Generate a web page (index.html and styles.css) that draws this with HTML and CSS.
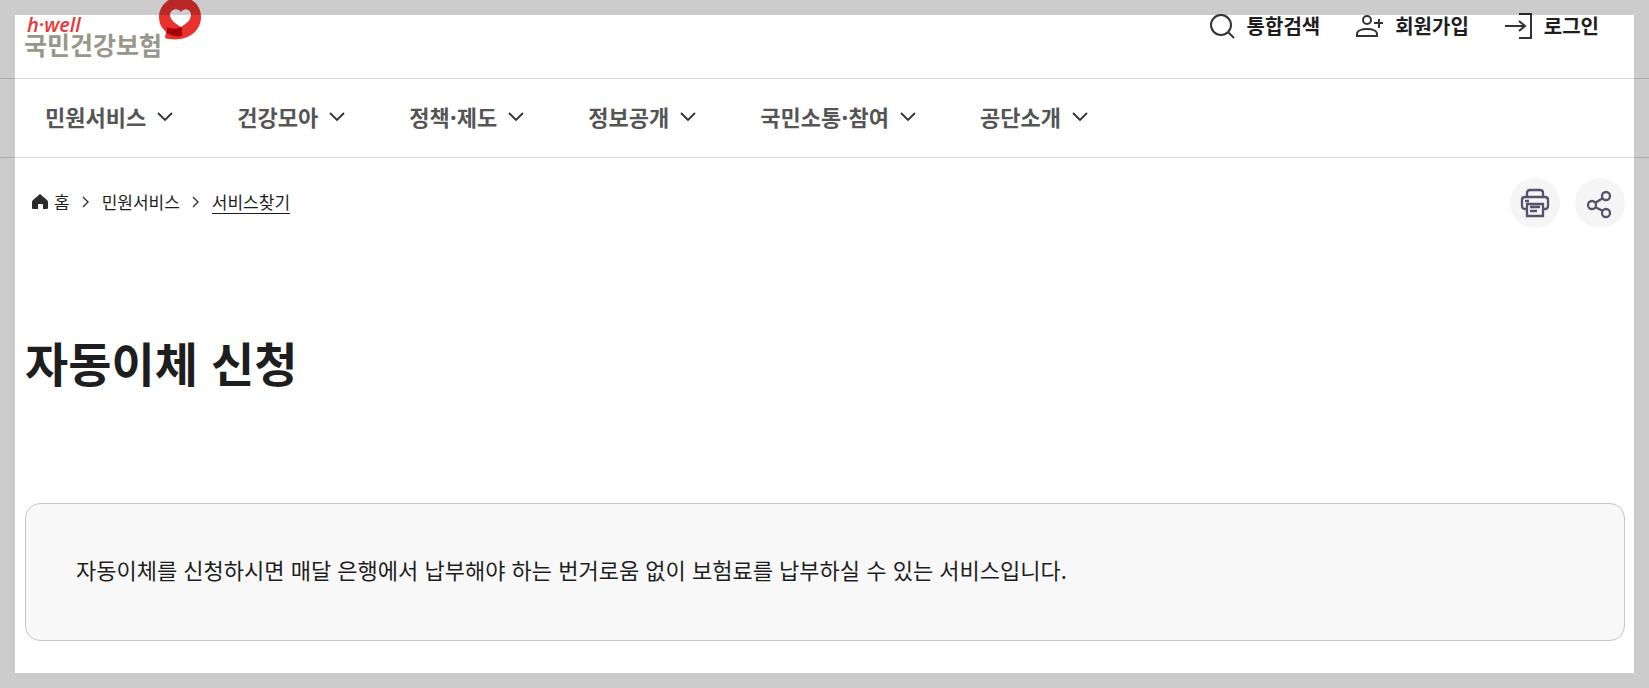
FILE: index.html
```html
<!DOCTYPE html>
<html lang="ko">
<head>
  <meta charset="UTF-8">
  <meta name="viewport" content="width=device-width, initial-scale=1">
  <title>자동이체 신청 | 국민건강보험</title>
  <link rel="stylesheet" href="styles.css">
</head>
<body>
  <header class="header">
    <div class="header-top">
      <a href="#" class="logo" aria-label="h-well 국민건강보험">
        <svg width="180" height="60" viewBox="0 0 180 60">
          <text class="logo-en" x="2" y="32">h·well</text>
          <text class="logo-ko" x="-1" y="55">국민건강보험</text>
          <path fill="#e8322e" fill-rule="evenodd" d="M155-3C143-3 134 6 134 17c0 8 4 12 7 15l-1 6c16 5 36-3 36-21C176 5 167-3 155-3zM156 27c-5-3-11-7-11-12 0-6 8-8 11-3 3-5 10-3 10 3 0 5-5 9-10 12z"/>
          <path fill="#a80008" d="M142 27c4 2 9 2 15 0v9c-5 1-10 0-15-3z"/>
        </svg>
      </a>
      <ul class="util">
        <li>
          <a href="#">
            <svg width="26" height="26" viewBox="0 0 26 26"><circle cx="12" cy="12" r="10"/><path d="M19 19l6 6"/></svg>
            통합검색
          </a>
        </li>
        <li>
          <a href="#">
            <svg width="28" height="26" viewBox="0 0 28 26"><circle cx="12" cy="7" r="4"/><path d="M2 23v-2c0-3 4-5 10-5s10 2 10 5v2zM24 6v9M19 10h9"/></svg>
            회원가입
          </a>
        </li>
        <li>
          <a href="#">
            <svg width="28" height="26" viewBox="0 0 28 26"><path d="M15 1h12v24H15M1 13h20M15 8l6 5-6 5"/></svg>
            로그인
          </a>
        </li>
      </ul>
    </div>
    <nav class="gnb" aria-label="주메뉴">
      <button type="button">민원서비스 <svg width="14" height="10" viewBox="0 0 14 10"><path d="M0 1l7 7 7-7"/></svg></button>
      <button type="button">건강모아 <svg width="14" height="10" viewBox="0 0 14 10"><path d="M0 1l7 7 7-7"/></svg></button>
      <button type="button">정책·제도 <svg width="14" height="10" viewBox="0 0 14 10"><path d="M0 1l7 7 7-7"/></svg></button>
      <button type="button">정보공개 <svg width="14" height="10" viewBox="0 0 14 10"><path d="M0 1l7 7 7-7"/></svg></button>
      <button type="button">국민소통·참여 <svg width="14" height="10" viewBox="0 0 14 10"><path d="M0 1l7 7 7-7"/></svg></button>
      <button type="button">공단소개 <svg width="14" height="10" viewBox="0 0 14 10"><path d="M0 1l7 7 7-7"/></svg></button>
    </nav>
  </header>

  <main class="content">
    <div class="location">
      <nav class="breadcrumb" aria-label="현재 위치">
        <a href="#" class="home">
          <svg width="16" height="16" viewBox="0 0 16 16"><path d="M8 0l7 6q1 1 1 2v6q0 1-1 1h-4v-4q0-1-1-1H7q-1 0-1 1v4H1q-1 0-1-1V8q0-1 1-2z"/></svg>
          홈
        </a>
        <svg class="sep" width="8" height="12" viewBox="0 0 8 12"><path d="M1 1l5 5-5 5"/></svg>
        <a href="#">민원서비스</a>
        <svg class="sep" width="8" height="12" viewBox="0 0 8 12"><path d="M1 1l5 5-5 5"/></svg>
        <a href="#" class="current" aria-current="page">서비스찾기</a>
      </nav>
      <div class="tools">
        <button type="button" aria-label="인쇄">
          <svg width="28" height="28" viewBox="0 0 28 28"><path d="M6 8V4q0-3 3-3h10q3 0 3 3v4M6 20H4q-3 0-3-3v-6q0-3 3-3h20q3 0 3 3v6q0 3-3 3h-2M6 15h16v12H6zM9 18h10M9 22h7M4 12h4"/></svg>
        </button>
        <button type="button" aria-label="공유">
          <svg width="28" height="28" viewBox="0 0 28 28"><circle cx="6" cy="16" r="4"/><circle cx="20" cy="7" r="4"/><circle cx="20" cy="24" r="4"/><path d="M9 14l8-5M9 18l8 4"/></svg>
        </button>
      </div>
    </div>
    <h1>자동이체 신청</h1>
    <p class="info-box">자동이체를 신청하시면 매달 은행에서 납부해야 하는 번거로움 없이 보험료를 납부하실 수 있는 서비스입니다.</p>
  </main>
  <div class="frame"></div>
</body>
</html>
```

FILE: styles.css
```css
* {
  box-sizing: border-box;
}
body {
  margin: 0;
  background: #fff;
  color: #1e1e1e;
  font-family: "Noto Sans CJK KR", sans-serif;
}
a {
  color: inherit;
  text-decoration: none;
}
button {
  padding: 0;
  border: none;
  background: none;
  font-family: inherit;
  cursor: pointer;
}
svg {
  display: block;
  flex: none;
  overflow: visible;
  fill: none;
  stroke: #333;
  stroke-width: 2;
}

/* header */
.header-top {
  display: flex;
  justify-content: space-between;
  align-items: flex-start;
  padding: 0 50px 18px 25px;
  border-bottom: 1px solid #d8d8d8;
}
.logo svg {
  stroke: none;
}
.logo-en {
  fill: #e8373a;
  font: italic 600 20px "Open Sans", sans-serif;
}
.logo-ko {
  fill: #97978b;
  font-size: 25px;
  font-weight: 700;
}
.util {
  display: flex;
  gap: 35px;
  margin: 0;
  padding: 11px 0 0;
  list-style: none;
}
.util a {
  display: flex;
  align-items: center;
  gap: 12px;
  font-size: 20px;
  font-weight: 700;
  line-height: 30px;
}
.gnb {
  display: flex;
  gap: 65px;
  padding: 18px 45px 22px;
  border-bottom: 1px solid #d8d8d8;
}
.gnb button {
  display: flex;
  align-items: center;
  gap: 12px;
  color: #555;
  font-size: 22px;
  font-weight: 700;
  line-height: 38px;
}
.gnb svg {
  margin-top: 2px;
  stroke-width: 1.8;
}

/* content */
.content {
  padding: 20px 24px 32px 25px;
}
.location {
  display: flex;
  justify-content: space-between;
  align-items: center;
}
.breadcrumb {
  display: flex;
  align-items: center;
  gap: 12px;
  padding: 0 0 2px 7px;
  font-size: 17px;
  line-height: 22px;
}
.breadcrumb .home {
  display: flex;
  align-items: center;
  gap: 6px;
}
.home svg {
  fill: #2b2b2b;
  stroke: none;
}
.sep {
  stroke-width: 1.4;
}
.current {
  border-bottom: 1px solid #1e1e1e;
}
.tools {
  display: flex;
  gap: 15px;
}
.tools button {
  display: flex;
  justify-content: center;
  align-items: center;
  width: 50px;
  height: 50px;
  border-radius: 50%;
  background: #f5f5f5;
}
.tools svg {
  stroke: #55536c;
  stroke-width: 2.3;
}
h1 {
  margin: 98px 0 105px;
  font-size: 47px;
  font-weight: 700;
  line-height: 72px;
}
.info-box {
  margin: 0;
  padding: 47px 50px 53px;
  border: 1px solid #c6c6c6;
  border-radius: 15px;
  background: #f8f8f8;
  font-size: 22px;
  line-height: 36px;
}

/* shaded edge over the whole window */
.frame {
  position: fixed;
  inset: 0;
  border: 15px solid rgba(0, 0, 0, 0.2);
  pointer-events: none;
}
```
